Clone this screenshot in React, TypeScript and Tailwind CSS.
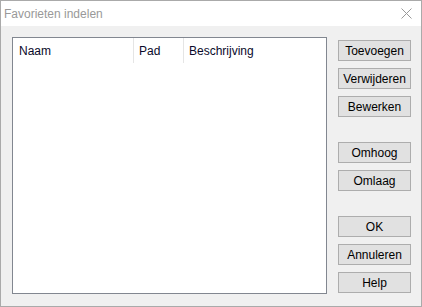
import React from "react";

const font = "font-['Liberation_Sans','Noto_Sans',sans-serif]";

const DialogButton: React.FC<{label: string; className?: string}> = ({label, className = ""}) => (
    <button
        className={`h-[21px] w-[73px] border border-[#adadad] bg-[#e1e1e1] text-[12px] leading-none text-black flex items-center justify-center ${className}`}
    >
        {label}
    </button>
);

const App: React.FC = () => {
    return (
        <div className={`w-[422px] h-[307px] border border-[#aaaaaa] bg-[#f0f0f0] flex flex-col ${font}`}>
            {/* Title bar */}
            <div className="h-[25px] bg-white flex items-center justify-between pl-[3px] pr-[9px]">
                <span className="text-[12px] text-[#999999]">Favorieten indelen</span>
                <svg width="11" height="11" viewBox="0 0 11 11" className="text-[#999999]">
                    <path d="M0.5 0.5 L10.5 10.5 M10.5 0.5 L0.5 10.5" stroke="currentColor" strokeWidth="1" fill="none" />
                </svg>
            </div>

            {/* Body */}
            <div className="flex-1 flex pt-[11px] pl-[11px]">
                {/* List */}
                <div className="w-[315px] h-[257px] border border-[#828790] bg-white">
                    <div className="h-[25px] flex text-[12px] text-[#0a0a2a]">
                        <div className="w-[121px] border-r border-[#e5e5e5] flex items-center pl-[6px]">Naam</div>
                        <div className="w-[50px] border-r border-[#e5e5e5] flex items-center pl-[5px]">Pad</div>
                        <div className="flex-1 flex items-center pl-[5px]">Beschrijving</div>
                    </div>
                </div>

                {/* Buttons */}
                <div className="ml-[11px] mt-[3px] flex flex-col">
                    <DialogButton label="Toevoegen" />
                    <DialogButton label="Verwijderen" className="mt-[7px]" />
                    <DialogButton label="Bewerken" className="mt-[7px]" />
                    <DialogButton label="Omhoog" className="mt-[25px]" />
                    <DialogButton label="Omlaag" className="mt-[7px]" />
                    <DialogButton label="OK" className="mt-[25px]" />
                    <DialogButton label="Annuleren" className="mt-[7px]" />
                    <DialogButton label="Help" className="mt-[7px]" />
                </div>
            </div>
        </div>
    );
};

export default App;
